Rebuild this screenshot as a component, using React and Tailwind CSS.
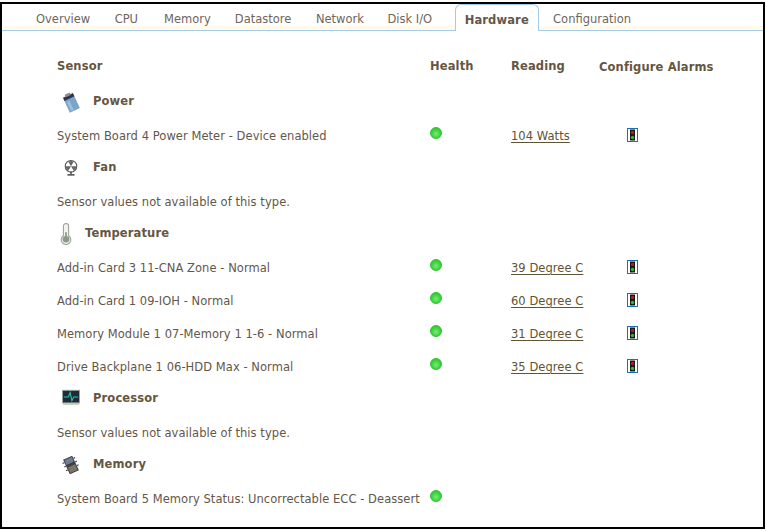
const tabs = [
  { name: 'Overview', className: '' },
  { name: 'CPU', className: '' },
  { name: 'Memory', className: 'ml-[1.5px]' },
  { name: 'Datastore', className: '-ml-[0.5px]' },
  { name: 'Network', className: '' },
  { name: 'Disk I/O', className: '-ml-[1px]' },
  { name: 'Hardware', active: true },
  { name: 'Configuration', className: 'ml-[2px]' },
]

const groups = [
  { name: 'Power', icon: <PowerIcon />, textLeft: 'pl-[36px]', rows: [{ label: 'System Board 4 Power Meter - Device enabled', value: '104 Watts' }] },
  { name: 'Fan', icon: <FanIcon />, textLeft: 'pl-[36px]', rows: [] },
  {
    name: 'Temperature',
    icon: <ThermometerIcon />,
    textLeft: 'pl-[28px]',
    rows: [
      { label: 'Add-in Card 3 11-CNA Zone - Normal', value: '39 Degree C' },
      { label: 'Add-in Card 1 09-IOH - Normal', value: '60 Degree C' },
      { label: 'Memory Module 1 07-Memory 1 1-6 - Normal', value: '31 Degree C' },
      { label: 'Drive Backplane 1 06-HDD Max - Normal', value: '35 Degree C' },
    ],
  },
  { name: 'Processor', icon: <ProcessorIcon />, textLeft: 'pl-[36px]', rows: [] },
  { name: 'Memory', icon: <MemoryIcon />, textLeft: 'pl-[36px]', rows: [{ label: 'System Board 5 Memory Status: Uncorrectable ECC - Deassert' }] },
]

function PowerIcon() {
  return (
    <svg width="22" height="22" viewBox="0 0 24 24" className="absolute left-[3px] top-[-2px]">
      <g transform="rotate(-25 12 12)">
        <rect x="6" y="7" width="12" height="15" fill="#7ba4c9" />
        <rect x="6" y="4" width="12" height="4" fill="#2e3350" />
        <rect x="9" y="2" width="6" height="3" fill="#8a8f8f" />
        <rect x="8" y="10" width="3" height="11" fill="#9cc0dc" />
      </g>
    </svg>
  )
}

function FanIcon() {
  return (
    <svg width="16" height="18" viewBox="0 0 18 20" className="absolute left-[6px] top-[0px]">
      <circle cx="9" cy="8" r="6.5" fill="#fff" stroke="#555" strokeWidth="1.2" />
      <path d="M9 8 L6 3 A6 6 0 0 1 12 3 Z M9 8 L15 8 A6 6 0 0 1 12 13 Z M9 8 L6 13 A6 6 0 0 1 3 8 Z" fill="#666" />
      <rect x="8.3" y="14" width="1.4" height="3" fill="#333" />
      <rect x="5" y="17" width="8" height="1.5" fill="#333" />
    </svg>
  )
}

function ThermometerIcon() {
  return (
    <svg width="14" height="24" viewBox="0 0 16 24" className="absolute left-[2px] top-[-3px]">
      <path d="M5 3 a3 3 0 0 1 6 0 V14 a5.5 5.5 0 1 1 -6 0 Z" fill="#f2f2ee" stroke="#9a9e96" strokeWidth="1.2" />
      <rect x="7" y="10" width="2" height="6" fill="#8b9a86" />
      <circle cx="8" cy="18" r="3.8" fill="#8b9a86" />
    </svg>
  )
}

function ProcessorIcon() {
  return (
    <svg width="18" height="17" viewBox="0 0 20 17" className="absolute left-[5px] top-[-1px]">
      <rect x="0.5" y="0.5" width="19" height="14" fill="#1f2c38" stroke="#9aa8a4" />
      <path d="M2 8 H7 L9 3 L11 12 L13 8 H18" fill="none" stroke="#2fc0b0" strokeWidth="1.2" />
      <rect x="1" y="15" width="18" height="1.5" fill="#a8c4a4" />
    </svg>
  )
}

function MemoryIcon() {
  return (
    <svg width="22" height="22" viewBox="0 0 22 22" className="absolute left-[3px] top-[-2px]">
      <g transform="rotate(-25 11 11)">
        <path d="M4 6 H6 M4 10 H6 M4 14 H6 M16 6 H18 M16 10 H18 M16 14 H18" stroke="#555" strokeWidth="1.2" />
        <rect x="6" y="3" width="10" height="16" fill="#3e4048" />
        <rect x="7" y="12" width="8" height="6" fill="#7c7464" />
        <rect x="7" y="4" width="8" height="5" fill="#6f7f96" />
      </g>
    </svg>
  )
}

function HealthDot() {
  return <span className="block size-[12px] rounded-full border border-[#2fc02f] bg-[radial-gradient(circle_at_50%_60%,#7de87d_0%,#3fd63f_50%,#22c322_100%)]" />
}

function AlarmIcon() {
  return (
    <svg width="11" height="14" viewBox="0 0 11 14" className="block">
      <rect x="0.5" y="0.5" width="10" height="13" fill="#fff" stroke="#1a6fb5" />
      <rect x="3" y="1.5" width="5" height="11" fill="#14181c" />
      <circle cx="5.5" cy="4.5" r="1.7" fill="#c01818" />
      <circle cx="5.5" cy="9.5" r="1.7" fill="#27c027" />
    </svg>
  )
}

function SensorRow({ label, value }) {
  return (
    <div className="grid h-[33px] grid-cols-[373px_81px_1fr] items-center pt-[4px]">
      <span className="whitespace-nowrap">{label}</span>
      <div className="pb-[7px]">
        <HealthDot />
      </div>
      {value && (
        <div className="flex">
          <a className="w-[116px] text-[#5f5433] underline underline-offset-2">{value}</a>
          <AlarmIcon />
        </div>
      )}
    </div>
  )
}

export default function App() {
  return (
    <div className="h-[531px] w-[767px] bg-white pt-[2px] font-['DejaVu_Sans',sans-serif] text-[11.5px] tracking-[0.05px] text-[#63574a]">
      <div className="h-[527px] w-[765px] border-2 border-black">
        <div className="flex h-[27px] items-end border-b border-[#a5cbe9] pl-[2px]">
          <div className="flex h-[24px] w-full items-start bg-[linear-gradient(to_bottom,#fff_0,#fff_20px,#fffaea_20px)] pl-[19.75px]">
            {tabs.map((tab) =>
              tab.active ? (
                <div
                  key={tab.name}
                  className="relative z-10 -mb-px -mt-[2px] ml-[10.3px] flex h-[27px] items-center rounded-t-[6px] border border-b-0 border-[#a5cbe9] bg-white px-[9px] pt-[5px] font-bold tracking-[0.13px]"
                >
                  {tab.name}
                </div>
              ) : (
                <div key={tab.name} className={`flex h-[24px] items-center px-[12.25px] pt-[4px] tracking-normal text-[#6f665c] ${tab.className}`}>
                  {tab.name}
                </div>
              ),
            )}
          </div>
        </div>

        <div className="pl-[55px] pt-[20px]">
          <div className="grid h-[32px] grid-cols-[373px_81px_88px_1fr] items-center font-bold tracking-[0.13px] text-[#665640]">
            <span>Sensor</span>
            <span>Health</span>
            <span>Reading</span>
            <span className="pt-[2px]">Configure Alarms</span>
          </div>
          <div className="pt-[2px]">
            {groups.map((g) => (
              <div key={g.name}>
                <div className="h-[33px] pt-[8px]">
                  <div className={`relative font-bold tracking-[0.13px] text-[#665640] ${g.textLeft}`}>
                    {g.icon}
                    {g.name}
                  </div>
                </div>
                {g.rows.length === 0 && (
                  <div className="flex h-[33px] items-center pt-[4px]">Sensor values not available of this type.</div>
                )}
                {g.rows.map((r) => (
                  <SensorRow key={r.label} {...r} />
                ))}
              </div>
            ))}
          </div>
        </div>
      </div>
    </div>
  )
}
